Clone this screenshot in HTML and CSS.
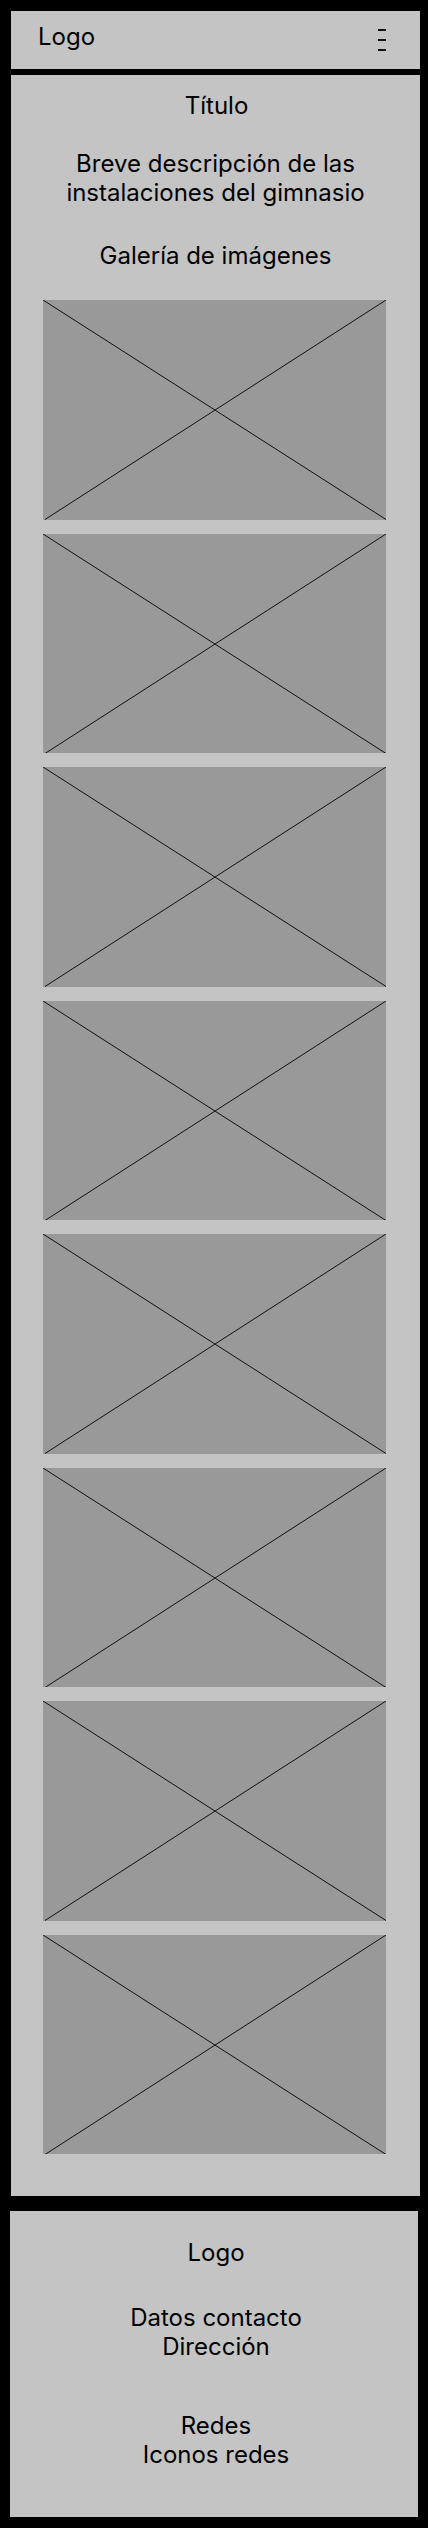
FILE: index.html
```html
<!DOCTYPE html>
<html lang="es">
<head>
<meta charset="utf-8">
<title>Gimnasio</title>
<link rel="stylesheet" href="styles.css">
</head>
<body>
<header class="topbar">
  <span class="logo">Logo</span>
  <button class="menu" aria-label="Menú">
    <span></span><span></span><span></span>
  </button>
</header>
<main class="content">
  <h1 class="title">Título</h1>
  <p class="desc">Breve descripción de las<br>instalaciones del gimnasio</p>
  <h2 class="gallery-title">Galería de imágenes</h2>
  <div class="gallery">
    <div class="ph"><svg viewBox="0 0 343 219" preserveAspectRatio="none"><line x1="0" y1="0" x2="343" y2="219"/><line x1="343" y1="0" x2="2" y2="219"/></svg></div>
    <div class="ph"><svg viewBox="0 0 343 219" preserveAspectRatio="none"><line x1="0" y1="0" x2="343" y2="219"/><line x1="343" y1="0" x2="2" y2="219"/></svg></div>
    <div class="ph"><svg viewBox="0 0 343 219" preserveAspectRatio="none"><line x1="0" y1="0" x2="343" y2="219"/><line x1="343" y1="0" x2="2" y2="219"/></svg></div>
    <div class="ph"><svg viewBox="0 0 343 219" preserveAspectRatio="none"><line x1="0" y1="0" x2="343" y2="219"/><line x1="343" y1="0" x2="2" y2="219"/></svg></div>
    <div class="ph"><svg viewBox="0 0 343 219" preserveAspectRatio="none"><line x1="0" y1="0" x2="343" y2="219"/><line x1="343" y1="0" x2="2" y2="219"/></svg></div>
    <div class="ph"><svg viewBox="0 0 343 219" preserveAspectRatio="none"><line x1="0" y1="0" x2="343" y2="219"/><line x1="343" y1="0" x2="2" y2="219"/></svg></div>
    <div class="ph"><svg viewBox="0 0 343 219" preserveAspectRatio="none"><line x1="0" y1="0" x2="343" y2="219"/><line x1="343" y1="0" x2="2" y2="219"/></svg></div>
    <div class="ph"><svg viewBox="0 0 343 219" preserveAspectRatio="none"><line x1="0" y1="0" x2="343" y2="219"/><line x1="343" y1="0" x2="2" y2="219"/></svg></div>
  </div>
</main>
<footer class="footer">
  <p class="f-logo">Logo</p>
  <p class="f-block">Datos contacto<br>Dirección</p>
  <p class="f-block f-redes">Redes<br>Iconos redes</p>
</footer>
</body>
</html>
```

FILE: styles.css
```css
html, body {
  margin: 0;
  padding: 0;
  background: #000;
}
body {
  width: 428px;
  height: 2528px;
  overflow: hidden;
  font-family: Inter, "Noto Sans", sans-serif;
  font-size: 24px;
  line-height: 29px;
  color: #000;
  padding-top: 11px;
  box-sizing: border-box;
}
.topbar {
  margin-left: 11px;
  width: 409px;
  height: 58px;
  background: #c4c4c4;
  display: flex;
  justify-content: space-between;
  align-items: flex-start;
  padding: 11px 34px 0 27px;
  box-sizing: border-box;
}
.logo {
  display: block;
}
.menu {
  border: 0;
  background: none;
  padding: 0;
  margin-top: 7px;
  display: flex;
  flex-direction: column;
  gap: 8.5px;
  width: 8px;
}
.menu span {
  display: block;
  width: 8px;
  height: 1.5px;
  background: #111;
}
.content {
  margin: 6px 0 0 11px;
  width: 409px;
  height: 2121px;
  background: #c4c4c4;
  padding-top: 16px;
  box-sizing: border-box;
  text-align: center;
}
.title {
  margin: 0;
  font-size: 24px;
  font-weight: 400;
  line-height: 29px;
  padding-left: 2px;
}
.desc {
  margin: 29px 0 0;
}
.gallery-title {
  margin: 34px 0 0;
  font-size: 24px;
  font-weight: 400;
  line-height: 29px;
}
.gallery {
  margin: 30px 0 0 32px;
  width: 343px;
  display: flex;
  flex-direction: column;
  gap: 14px;
}
.ph {
  height: 219.5px;
  background: #999;
}
.ph svg {
  display: block;
  width: 100%;
  height: 100%;
}
.ph line {
  stroke: #111;
  stroke-width: 1;
  vector-effect: non-scaling-stroke;
}
.footer {
  margin: 15px 0 0 10px;
  width: 408px;
  height: 306px;
  background: #c4c4c4;
  padding: 27px 0 0 4px;
  box-sizing: border-box;
  text-align: center;
}
.footer p {
  margin: 0;
}
.f-block {
  margin-top: 36px !important;
}
.f-redes {
  margin-top: 50px !important;
}
```
